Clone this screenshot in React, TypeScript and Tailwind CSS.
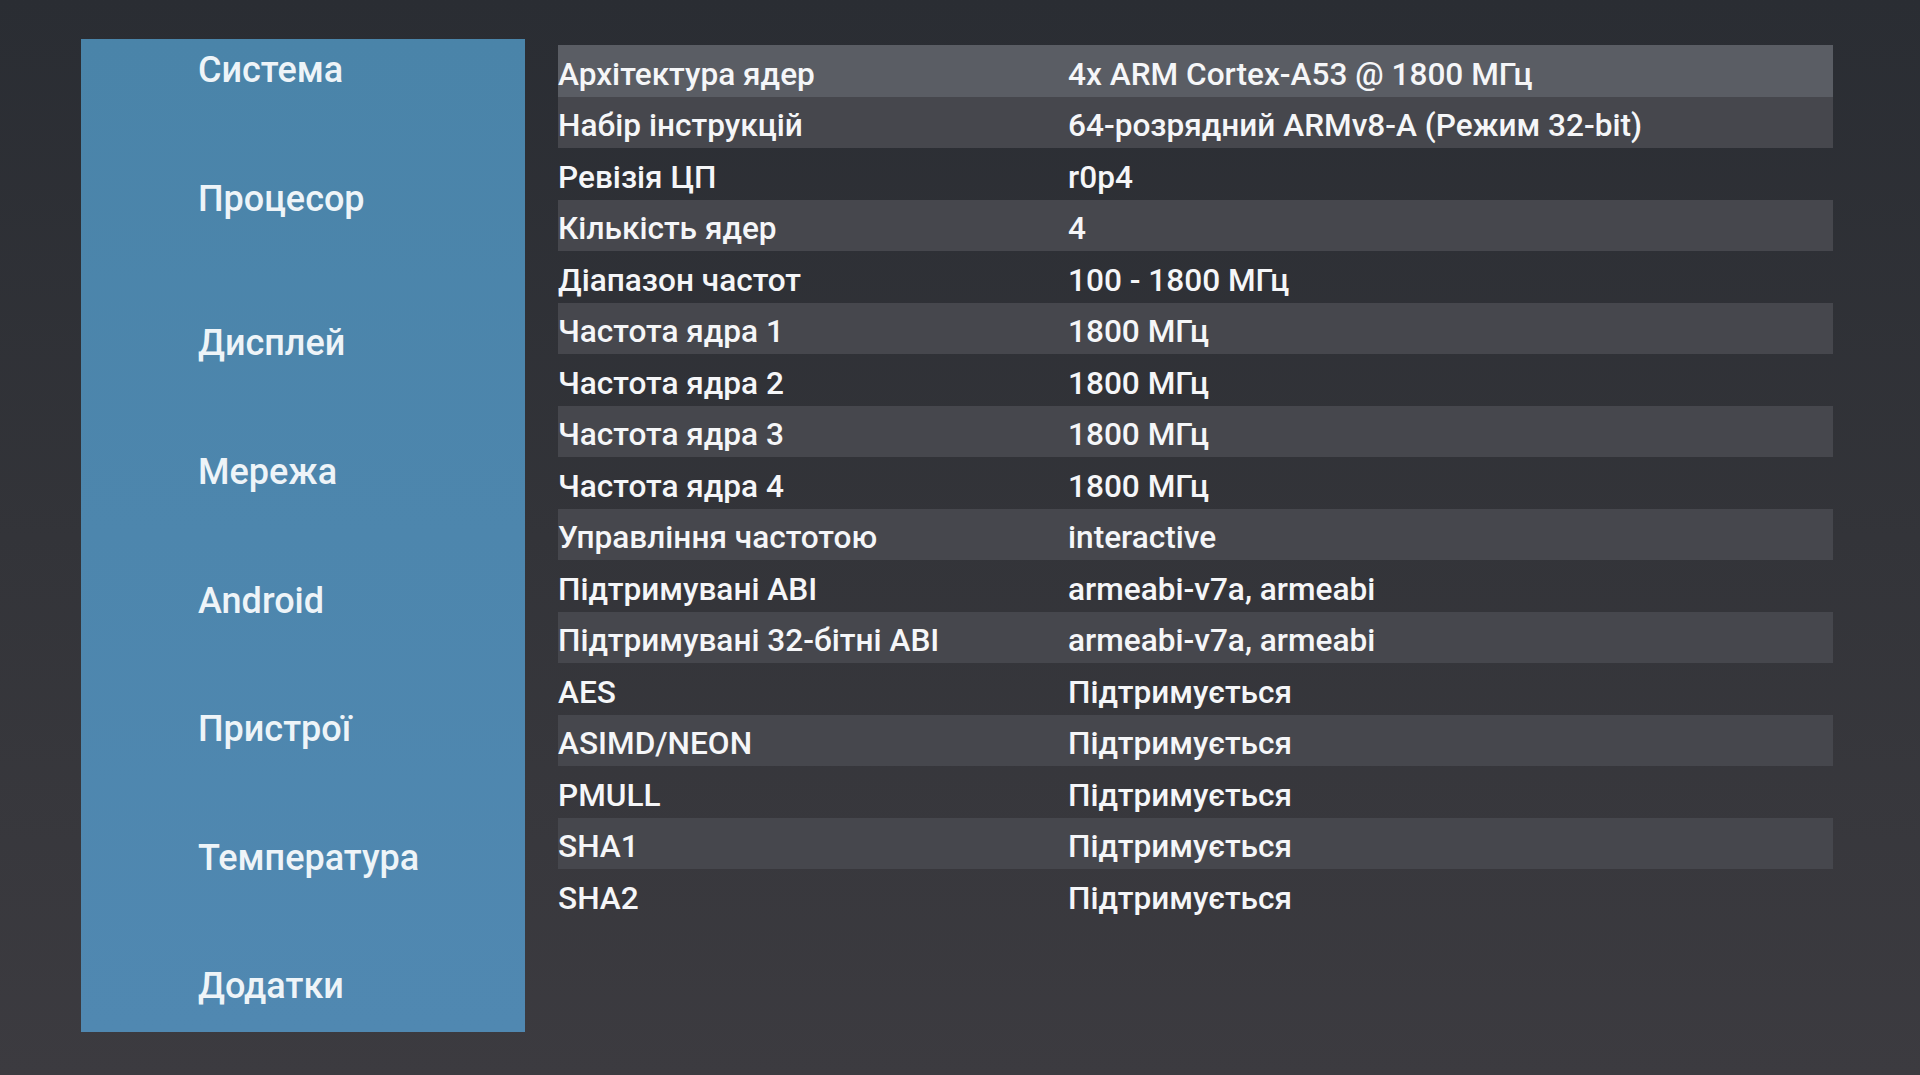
import React from "react";

const menu = [
  "Система",
  "Процесор",
  "Дисплей",
  "Мережа",
  "Android",
  "Пристрої",
  "Температура",
  "Додатки",
];

const rows: [string, string][] = [
  ["Архітектура ядер", "4x ARM Cortex-A53 @ 1800 МГц"],
  ["Набір інструкцій", "64-розрядний ARMv8-A (Режим 32-bit)"],
  ["Ревізія ЦП", "r0p4"],
  ["Кількість ядер", "4"],
  ["Діапазон частот", "100 - 1800 МГц"],
  ["Частота ядра 1", "1800 МГц"],
  ["Частота ядра 2", "1800 МГц"],
  ["Частота ядра 3", "1800 МГц"],
  ["Частота ядра 4", "1800 МГц"],
  ["Управління частотою", "interactive"],
  ["Підтримувані ABI", "armeabi-v7a, armeabi"],
  ["Підтримувані 32-бітні ABI", "armeabi-v7a, armeabi"],
  ["AES", "Підтримується"],
  ["ASIMD/NEON", "Підтримується"],
  ["PMULL", "Підтримується"],
  ["SHA1", "Підтримується"],
  ["SHA2", "Підтримується"],
];

export default function App() {
  return (
    <div
      className="w-[1920px] h-[1075px] overflow-hidden bg-gradient-to-b from-[#2a2d33] via-[#333439] to-[#3c3b40] flex items-start pl-[81px] pt-[39px] gap-[33px]"
      style={{ fontFamily: "Roboto, 'Noto Sans', sans-serif" }}
    >
      <aside className="w-[444px] h-[993px] shrink-0 overflow-hidden bg-gradient-to-b from-[#4a84a9] to-[#5088b1]">
        <ul className="mt-[-33px] flex flex-col">
          {menu.map((m, i) => (
            <li
              key={m}
              className={
                "h-[128.6px] shrink-0 flex items-center pl-[117px] text-[36px] leading-none font-medium text-[#eef4f8] " +
                (i === 2 ? "mt-[16px]" : "")
              }
            >
              {m}
            </li>
          ))}
        </ul>
      </aside>
      <section className="w-[1275px] mt-[6px] flex flex-col">
        {rows.map(([k, v], i) => {
          const bg =
            i === 0
              ? "bg-[#5a5d64]"
              : i % 2 === 1
              ? "bg-[#46474d]"
              : "bg-transparent";
          return (
            <div
              key={k}
              className={"h-[51.5px] box-border pt-[8px] flex items-center text-[31.6px] leading-none font-medium text-[#f5f6f8] " + bg}
            >
              <div className="w-[510px] shrink-0 whitespace-nowrap">{k}</div>
              <div className="flex-1 whitespace-nowrap">{v}</div>
            </div>
          );
        })}
      </section>
    </div>
  );
}
